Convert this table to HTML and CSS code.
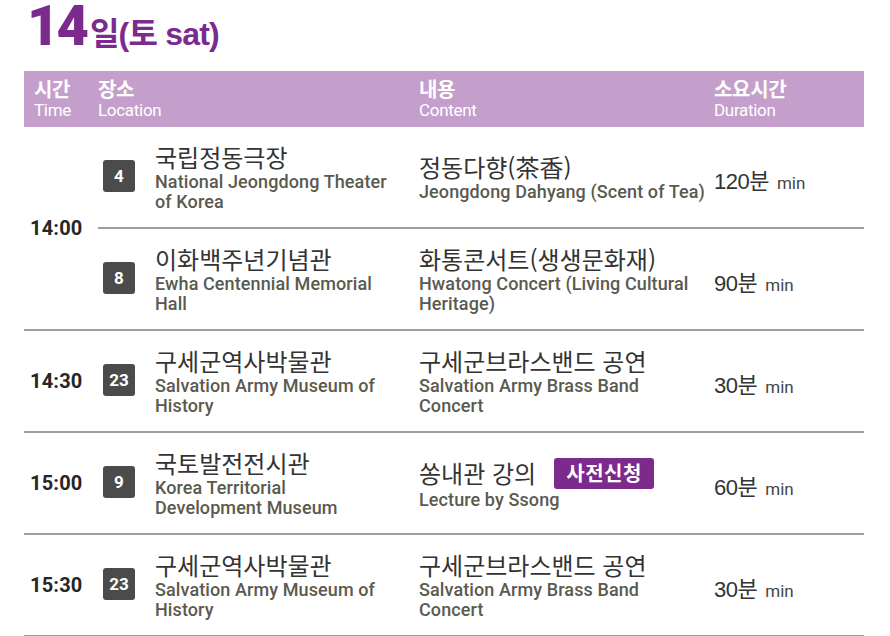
FILE: index.html
```html
<!DOCTYPE html>
<html lang="ko">
<head>
<meta charset="utf-8">
<title>14일(토 sat)</title>
<link rel="stylesheet" href="styles.css">
</head>
<body>
<div class="page">
  <h1 class="title"><span class="day">14</span><span class="rest">일(토 sat)</span></h1>
  <div class="table">
    <div class="thead">
      <div class="th th-time"><span class="ko">시간</span><span class="en">Time</span></div>
      <div class="th"><span class="ko">장소</span><span class="en">Location</span></div>
      <div class="th"><span class="ko">내용</span><span class="en">Content</span></div>
      <div class="th"><span class="ko">소요시간</span><span class="en">Duration</span></div>
    </div>

    <div class="group">
      <div class="time">14:00</div>
      <div class="rows">
        <div class="row">
          <div class="loc"><span class="badge">4</span><div class="text"><div class="ko">국립정동극장</div><div class="en">National Jeongdong Theater<br>of Korea</div></div></div>
          <div class="content"><div class="text"><div class="ko">정동다향(茶香)</div><div class="en">Jeongdong Dahyang (Scent of Tea)</div></div></div>
          <div class="dur"><span class="num">120분</span><span class="min">min</span></div>
        </div>
        <div class="row">
          <div class="loc"><span class="badge">8</span><div class="text"><div class="ko">이화백주년기념관</div><div class="en">Ewha Centennial Memorial<br>Hall</div></div></div>
          <div class="content"><div class="text"><div class="ko">화통콘서트(생생문화재)</div><div class="en">Hwatong Concert (Living Cultural<br>Heritage)</div></div></div>
          <div class="dur"><span class="num">90분</span><span class="min">min</span></div>
        </div>
      </div>
    </div>

    <div class="group">
      <div class="time">14:30</div>
      <div class="rows">
        <div class="row">
          <div class="loc"><span class="badge">23</span><div class="text"><div class="ko">구세군역사박물관</div><div class="en">Salvation Army Museum of<br>History</div></div></div>
          <div class="content"><div class="text"><div class="ko">구세군브라스밴드 공연</div><div class="en">Salvation Army Brass Band<br>Concert</div></div></div>
          <div class="dur"><span class="num">30분</span><span class="min">min</span></div>
        </div>
      </div>
    </div>

    <div class="group">
      <div class="time">15:00</div>
      <div class="rows">
        <div class="row">
          <div class="loc"><span class="badge">9</span><div class="text"><div class="ko">국토발전전시관</div><div class="en">Korea Territorial<br>Development Museum</div></div></div>
          <div class="content"><div class="text"><div class="ko ko-tag">쏭내관 강의<span class="tag">사전신청</span></div><div class="en">Lecture by Ssong</div></div></div>
          <div class="dur"><span class="num">60분</span><span class="min">min</span></div>
        </div>
      </div>
    </div>

    <div class="group">
      <div class="time">15:30</div>
      <div class="rows">
        <div class="row">
          <div class="loc"><span class="badge">23</span><div class="text"><div class="ko">구세군역사박물관</div><div class="en">Salvation Army Museum of<br>History</div></div></div>
          <div class="content"><div class="text"><div class="ko">구세군브라스밴드 공연</div><div class="en">Salvation Army Brass Band<br>Concert</div></div></div>
          <div class="dur"><span class="num">30분</span><span class="min">min</span></div>
        </div>
      </div>
    </div>
  </div>
</div>
</body>
</html>
```

FILE: styles.css
```css
* { box-sizing: border-box; }
html, body { margin: 0; padding: 0; background: #fff; }
body { font-family: Roboto, "Noto Sans CJK KR", sans-serif; color: #333; }

.page { width: 890px; height: 636px; overflow: hidden; }

.title {
  margin: 0;
  height: 71px;
  padding-left: 27px;
  display: flex;
  align-items: baseline;
  color: #7b2b8d;
  line-height: 52px;
  font-weight: 700;
}
.title .day {
  font-family: Roboto, sans-serif;
  font-weight: 900;
  font-size: 56px;
  letter-spacing: -3px;
  margin-right: 4px;
}
.title .rest {
  font-family: "Liberation Sans", "Noto Sans CJK KR", sans-serif;
  font-size: 32px;
  font-weight: 700;
  letter-spacing: -0.8px;
}

.table { margin-left: 24px; width: 840px; }

.thead {
  display: grid;
  grid-template-columns: 74px 321px 295px 150px;
  height: 56px;
  background: #c49fcb;
  color: #fff;
}
.th {
  display: flex;
  flex-direction: column;
  padding-top: 6px;
}
.th-time { padding-left: 10px; }
.th .ko {
  font-family: "Noto Sans CJK KR", sans-serif;
  font-weight: 700;
  font-size: 20px;
  line-height: 23px;
  letter-spacing: -0.3px;
}
.th .en {
  font-family: Roboto, sans-serif;
  font-weight: 400;
  font-size: 17px;
  line-height: 20px;
  letter-spacing: -0.3px;
}

.group {
  display: flex;
  border-bottom: 2px solid #9e9e9e;
}
.time {
  width: 74px;
  flex: none;
  padding-left: 6px;
  display: flex;
  align-items: center;
  font-family: Roboto, sans-serif;
  font-weight: 700;
  font-size: 20px;
  color: #262626;
  letter-spacing: 0.2px;
}
.rows { flex: 1; display: flex; flex-direction: column; }
.row {
  display: grid;
  grid-template-columns: 321px 295px 150px;
  height: 100px;
}
.row:not(:last-child) { border-bottom: 2px solid #9e9e9e; height: 102px; }

.loc, .content, .dur { display: flex; align-items: center; }
.loc { padding-left: 5px; }

.badge {
  flex: none;
  width: 32px;
  height: 32px;
  border-radius: 3px;
  background: #4b4b4b;
  color: #fff;
  font-family: Roboto, sans-serif;
  font-weight: 700;
  font-size: 17px;
  display: flex;
  align-items: center;
  justify-content: center;
  margin-right: 20px;
  margin-top: -2px;
}

.text .ko {
  font-family: "Noto Sans CJK KR", sans-serif;
  font-weight: 400;
  font-size: 24px;
  line-height: 30px;
  color: #333;
  white-space: nowrap;
}
.text .en {
  font-family: Roboto, sans-serif;
  font-size: 18px;
  font-weight: 500;
  line-height: 20px;
  color: #5a5a4f;
  letter-spacing: 0.1px;
  white-space: nowrap;
}
.ko-tag { display: flex; align-items: center; height: 33px; }
.tag {
  margin-left: 18px;
  height: 31px;
  width: 100px;
  border-radius: 3px;
  background: #7c2a8c;
  color: #fff;
  font-weight: 700;
  font-size: 20px;
  display: flex;
  align-items: center;
  justify-content: center;
  letter-spacing: 0.5px;
}

.dur { padding-top: 4px; align-items: baseline; align-content: center; flex-wrap: wrap; }
.dur .num {
  font-family: "Liberation Sans", "Noto Sans CJK KR", sans-serif;
  font-size: 22px;
  color: #333;
  letter-spacing: -0.5px;
}
.dur .min {
  font-family: Roboto, sans-serif;
  font-size: 17px;
  color: #444;
  margin-left: 8px;
}
```
